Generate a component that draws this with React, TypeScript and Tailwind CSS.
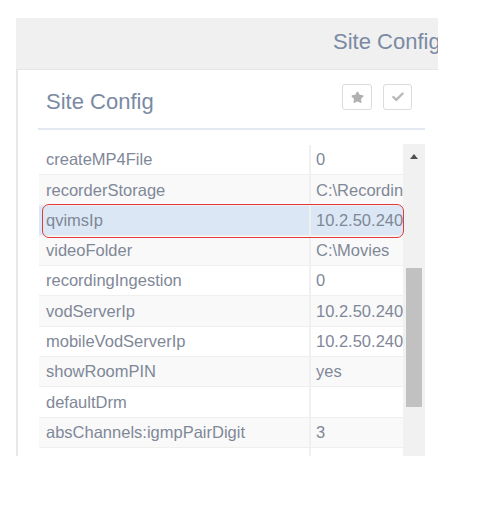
import { Check, Star } from "lucide-react";

type Row = { key: string; value: string };

const rows: Row[] = [
  { key: "createMP4File", value: "0" },
  { key: "recorderStorage", value: "C:\\Recordings" },
  { key: "qvimsIp", value: "10.2.50.240" },
  { key: "videoFolder", value: "C:\\Movies" },
  { key: "recordingIngestion", value: "0" },
  { key: "vodServerIp", value: "10.2.50.240" },
  { key: "mobileVodServerIp", value: "10.2.50.240" },
  { key: "showRoomPIN", value: "yes" },
  { key: "defaultDrm", value: "" },
  { key: "absChannels:igmpPairDigit", value: "3" },
  { key: "", value: "" },
];

export default function App() {
  return (
    <div
      className="min-h-screen bg-white pl-[16px] pt-[18px]"
      style={{ fontFamily: '"Liberation Sans", Arial, sans-serif' }}
    >
      <div className="flex h-[438px] w-[422px] flex-col overflow-hidden">
        {/* page header */}
        <div className="h-[52px] shrink-0 border-b border-[#e6e6e6] bg-[#f0f0f0] pl-[317px] pt-[11px]">
          <span className="whitespace-nowrap text-[22px] leading-[25px] text-[#7b8aa3]">
            Site Config
          </span>
        </div>

        {/* panel */}
        <div className="flex-1 border-l-2 border-[#e8e8e8] bg-white pl-[20px] pr-[13px]">
          <div className="flex h-[60px] items-start justify-between border-b-2 border-[#e4e8f0] pt-[14px] pl-[8px] pr-[13px]">
            <h1 className="mt-[5px] text-[22px] leading-[25px] text-[#7b8aa3]">Site Config</h1>
            <div className="flex gap-[11px]">
              <button className="flex h-[26px] w-[30px] items-center justify-center rounded-[3px] border border-[#dcdcdc] bg-white">
                <Star size={13} className="fill-[#b0b0b0] text-[#b0b0b0]" />
              </button>
              <button className="flex h-[26px] w-[29px] items-center justify-center rounded-[3px] border border-[#dcdcdc] bg-white">
                <Check size={14} strokeWidth={4} className="text-[#b8b8b8]" />
              </button>
            </div>
          </div>

          {/* table + scrollbar */}
          <div className="relative ml-[1px] mt-[15px] flex">
            <div className="w-[364px]">
              {rows.map((row, i) => (
                <div
                  key={i}
                  className={
                    "flex h-[30.3px] items-center border-b border-[#efefef] text-[16.5px] text-[#7f8898] " +
                    (i === 2 ? "bg-[#dbe7f4]" : i % 2 === 0 ? "bg-white" : "bg-[#f9f9f9]")
                  }
                >
                  <div className="w-[270px] whitespace-nowrap pl-[7px]">{row.key}</div>
                  <div className="flex h-full w-[94px] items-center overflow-hidden whitespace-nowrap border-l-2 border-[#f0f0f0] pl-[5px]">
                    {row.value}
                  </div>
                </div>
              ))}
            </div>

            {/* scrollbar */}
            <div className="-mt-[1px] flex w-[22px] flex-col items-center bg-[#f1f1f1]">
              <div className="flex h-[25px] w-full items-center justify-center">
                <div className="h-0 w-0 border-x-[4px] border-b-[5px] border-x-transparent border-b-[#505050]" />
              </div>
              <div className="mt-[99px] h-[139px] w-[16px] bg-[#c1c1c1]" />
            </div>

            {/* highlight outline */}
            <div className="pointer-events-none absolute left-[3px] top-[59px] h-[34px] w-[362px] rounded-[7px] border-[1.5px] border-[#e23b3b]" />
          </div>
        </div>
      </div>
    </div>
  );
}
